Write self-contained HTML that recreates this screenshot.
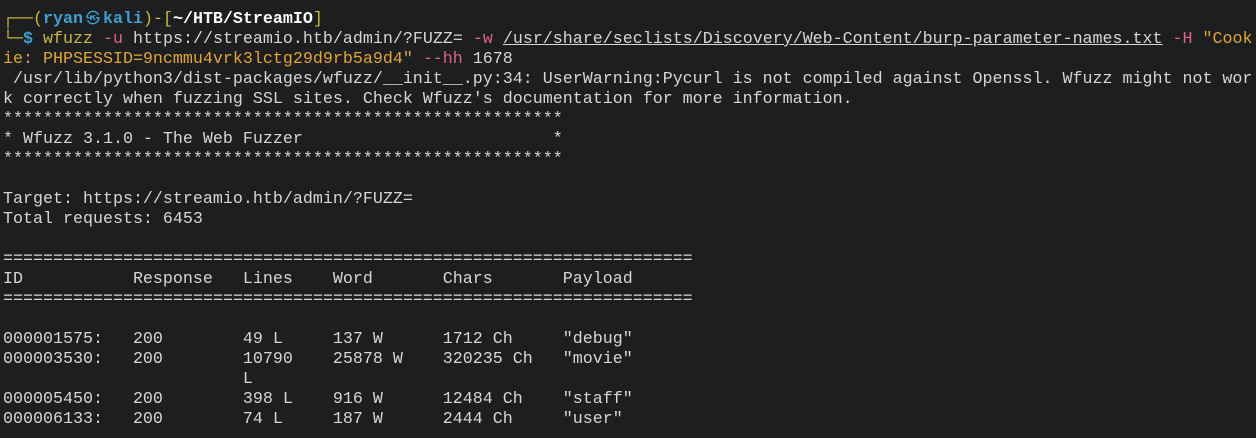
<!DOCTYPE html>
<html><head><meta charset="utf-8"><style>
html,body{margin:0;padding:0;background:#1c1e20;width:1256px;height:438px;overflow:hidden}
pre{margin:0;padding:10px 0 0 3px;font-family:"Liberation Mono","DejaVu Sans Mono",monospace;font-size:16.67px;line-height:20px;color:#d6d6d6;white-space:pre}
.y{color:#c9b93a}.b{color:#3e9fd0;font-weight:bold}.w{color:#ffffff;font-weight:bold}.p{color:#e2608c}.o{color:#e3a62a}.u{text-decoration:underline}
.k{display:inline-block;width:20px;text-align:center;font-size:14px;font-weight:normal;overflow:hidden;vertical-align:top}
</style></head><body><pre><span class="y">┌──(</span><span class="b">ryan<span class="k">㉿</span>kali</span><span class="y">)-[</span><span class="w">~/HTB/StreamIO</span><span class="y">]</span>
<span class="y">└─</span><span class="b">$</span> <span class="y">wfuzz</span> <span class="p">-u</span> https://streamio.htb/admin/?FUZZ= <span class="p">-w</span> <span class="u">/usr/share/seclists/Discovery/Web-Content/burp-parameter-names.txt</span> <span class="p">-H</span> <span class="o">"Cook</span>
<span class="o">ie: PHPSESSID=9ncmmu4vrk3lctg29d9rb5a9d4"</span> <span class="p">--hh</span> 1678
 /usr/lib/python3/dist-packages/wfuzz/__init__.py:34: UserWarning:Pycurl is not compiled against Openssl. Wfuzz might not wor
k correctly when fuzzing SSL sites. Check Wfuzz's documentation for more information.
********************************************************
* Wfuzz 3.1.0 - The Web Fuzzer                         *
********************************************************

Target: https://streamio.htb/admin/?FUZZ=
Total requests: 6453

=====================================================================
ID           Response   Lines    Word       Chars       Payload
=====================================================================

000001575:   200        49 L     137 W      1712 Ch     "debug"
000003530:   200        10790    25878 W    320235 Ch   "movie"
                        L
000005450:   200        398 L    916 W      12484 Ch    "staff"
000006133:   200        74 L     187 W      2444 Ch     "user"
</pre></body></html>
